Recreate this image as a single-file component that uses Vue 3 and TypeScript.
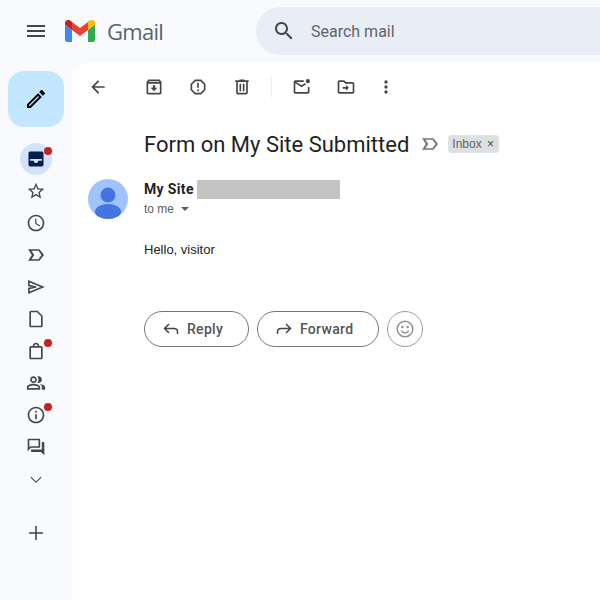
<script setup lang="ts">
const navItems = [
  { name: "inbox", dot: true, d: "M5 3h14a2 2 0 0 1 2 2v14a2 2 0 0 1-2 2H5a2 2 0 0 1-2-2V5a2 2 0 0 1 2-2zm0 9v2h4.200c.3 1.600 1.400 2.800 2.800 2.800s2.500-1.200 2.800-2.800H19v-2H5z" },
  { name: "star", d: "M22 9.24l-7.19-.62L12 2 9.19 8.63 2 9.24l5.46 4.73L5.82 21 12 17.27 18.18 21l-1.63-7.03L22 9.24zM12 15.4l-3.76 2.27 1-4.28-3.32-2.88 4.38-.38L12 6.1l1.71 4.04 4.38.38-3.32 2.88 1 4.28L12 15.4z" },
  { name: "clock", d: "M11.99 2C6.47 2 2 6.48 2 12s4.47 10 9.99 10C17.52 22 22 17.52 22 12S17.52 2 11.99 2zM12 20c-4.42 0-8-3.58-8-8s3.58-8 8-8 8 3.58 8 8-3.58 8-8 8zm.5-13H11v6l5.25 3.15.75-1.23-4.5-2.67z" },
  { name: "important", d: "M15 19H2.500l4.500-7-4.500-7H15c.65 0 1.26.31 1.63.84L21.500 12l-4.870 6.160c-.37.52-.98.84-1.630.84zm-8.500-2H15l3.500-5L15 7H6.500l3.500 5-3.500 5z" },
  { name: "send", outline: true, d: "M3.500 5 20 12 3.500 19v-5.200L12 12 3.500 10.200z" },
  { name: "draft", d: "M14 2H6c-1.1 0-1.99.9-1.99 2L4 20c0 1.1.89 2 1.99 2H18c1.1 0 2-.9 2-2V8l-6-6zM6 20V4h7.200L18 8.800V20H6z" },
  { name: "bag", dot: true, d: "M18 6h-2c0-2.21-1.79-4-4-4S8 3.79 8 6H6c-1.1 0-2 .9-2 2v12c0 1.1.9 2 2 2h12c1.1 0 2-.9 2-2V8c0-1.1-.9-2-2-2zm-6-2c1.1 0 2 .9 2 2h-4c0-1.1.9-2 2-2zm6 16H6V8h12v12z" },
  { name: "people", d: "M16.67 13.13C18.04 14.06 19 15.32 19 17v3h4v-3c0-2.18-3.57-3.47-6.33-3.87zM15 12c2.21 0 4-1.79 4-4s-1.79-4-4-4c-.47 0-.91.1-1.33.24C14.5 5.27 15 6.58 15 8s-.5 2.73-1.33 3.76c.42.14.86.24 1.33.24zM9 12c2.21 0 4-1.79 4-4s-1.79-4-4-4-4 1.79-4 4 1.79 4 4 4zm0-6c1.1 0 2 .9 2 2s-.9 2-2 2-2-.9-2-2 .9-2 2-2zM9 13c-2.67 0-8 1.34-8 4v3h16v-3c0-2.66-5.33-4-8-4zm6 5H3v-.99C3.2 16.29 6.3 15 9 15s5.8 1.29 6 2v1z" },
  { name: "info", dot: true, d: "M11 7h2v2h-2zm0 4h2v6h-2zm1-9C6.48 2 2 6.48 2 12s4.48 10 10 10 10-4.48 10-10S17.52 2 12 2zm0 18c-4.41 0-8-3.59-8-8s3.59-8 8-8 8 3.59 8 8-3.59 8-8 8z" },
  { name: "forum", d: "M15 4v7H5.17L4 12.17V4h11m1-2H3c-.55 0-1 .45-1 1v14l4-4h10c.55 0 1-.45 1-1V3c0-.55-.45-1-1-1zm5 4h-2v9H6v2c0 .55.45 1 1 1h11l4 4V7c0-.55-.45-1-1-1z" },
  { name: "more", d: "M17.700 9.300 12 15l-5.700-5.700-.9.9L12 16.800l6.600-6.600z" }
];

const toolsA = [
  "M20.54 5.23l-1.39-1.68C18.88 3.21 18.47 3 18 3H6c-.47 0-.88.21-1.16.55L3.46 5.23C3.17 5.57 3 6.02 3 6.5V19c0 1.1.9 2 2 2h14c1.1 0 2-.9 2-2V6.5c0-.48-.17-.93-.46-1.27zM6.24 5h11.52l.83 1H5.42l.82-1zM5 19V8h14v11H5zm8.45-9h-2.9v3H8l4 4 4-4h-2.55z",
  "M15.73 3H8.27L3 8.27v7.46L8.27 21h7.46L21 15.73V8.27L15.73 3zM19 14.9L14.9 19H9.1L5 14.9V9.1L9.1 5h5.8L19 9.1v5.8zM11 7h2v6h-2zm0 8h2v2h-2z",
  "M15 4V3H9v1H4v2h1v13c0 1.1.9 2 2 2h10c1.1 0 2-.9 2-2V6h1V4h-5zm2 15H7V6h10v13zM9 8h2v9H9zm4 0h2v9h-2z"
];
const toolsB = [
  "M19 11.900V18H4V7.500l7.500 4.700 5.200-3.300-1-1.700-4.200 2.600L5 6h9.100V4H4c-1.100 0-2 .9-2 2v12c0 1.100.9 2 2 2h15c1.100 0 2-.9 2-2v-6.100h-2zM19 2.500a2.500 2.500 0 1 0 0 5 2.500 2.500 0 0 0 0-5z",
  "M20 6h-8l-2-2H4c-1.100 0-2 .9-2 2v12c0 1.100.9 2 2 2h16c1.100 0 2-.9 2-2V8c0-1.100-.9-2-2-2zm0 12H4V6h5.170l2 2H20v10zm-8-4H8v-2h4V9.500l3.500 3.500-3.500 3.500V14z",
  "M12 8a2 2 0 1 0 0-4 2 2 0 0 0 0 4zm0 2a2 2 0 1 0 0 4 2 2 0 0 0 0-4zm0 6a2 2 0 1 0 0 4 2 2 0 0 0 0-4z"
];
</script>

<template>
  <div class="app">
    <header class="topbar">
      <button class="menu">
        <svg viewBox="0 0 24 24" width="24" height="24"><path d="M3 18h18v-2H3v2zm0-5h18v-2H3v2zm0-7v2h18V6H3z" /></svg>
      </button>
      <div class="brand">
        <svg class="logo" viewBox="0 0 30 22" width="30" height="22">
          <path fill="#4285f4" d="M0 20a2 2 0 0 0 2 2h5V10L0 4.500z" />
          <path fill="#34a853" d="M23 22h5a2 2 0 0 0 2-2V4.500L23 10z" />
          <path fill="#fbbc04" d="M23 1v9l7-5.500V3c0-2.600-3-4-5-2.500z" />
          <path fill="#ea4335" d="M7 10V2l8 6 8-6v8l-8 6z" />
          <path fill="#c5221f" d="M0 3v1.500L7 10V2L5 .5C3 -1 0 .4 0 3z" />
        </svg>
        <span class="wordmark">Gmail</span>
      </div>
      <div class="search">
        <svg viewBox="0 0 24 24" width="24" height="24"><path d="M15.500 14h-.79l-.28-.27C15.410 12.590 16 11.110 16 9.500 16 5.910 13.090 3 9.500 3S3 5.910 3 9.500 5.910 16 9.500 16c1.610 0 3.090-.59 4.230-1.570l.27.28v.79l5 4.990L20.490 19l-4.990-5zm-6 0C7.010 14 5 11.990 5 9.500S7.010 5 9.500 5 14 7.010 14 9.500 11.990 14 9.500 14z" /></svg>
        <span>Search mail</span>
      </div>
    </header>

    <div class="body">
      <aside class="rail">
        <button class="compose">
          <svg viewBox="0 0 24 24" width="24" height="24"><path d="M14.060 9.020l.92.92L5.920 19H5v-.92l9.060-9.060M17.660 3c-.25 0-.51.1-.7.29l-1.830 1.830 3.750 3.750 1.830-1.830c.39-.39.39-1.020 0-1.410l-2.340-2.340c-.2-.2-.45-.29-.71-.29zm-3.600 3.190L3 17.250V21h3.750L17.810 9.940l-3.750-3.750z" /></svg>
        </button>
        <nav class="nav">
          <div v-for="item in navItems" :key="item.name" class="nav-item" :class="{ active: item.name === 'inbox' }">
            <svg viewBox="0 0 24 24" width="20" height="20">
              <path v-if="item.outline" class="outline" :d="item.d" />
              <path v-else fill-rule="evenodd" :d="item.d" />
            </svg>
            <i v-if="item.dot" class="dot"></i>
          </div>
        </nav>
        <div class="add">
          <svg viewBox="0 0 24 24" width="24" height="24"><path d="M19 12.800h-6.200V19h-1.600v-6.200H5v-1.600h6.200V5h1.600v6.200H19z" /></svg>
        </div>
      </aside>

      <main class="panel">
        <div class="toolbar">
          <svg class="back" viewBox="0 0 24 24" width="20" height="20"><path d="M20 11H7.830l5.590-5.590L12 4l-8 8 8 8 1.410-1.410L7.830 13H20v-2z" /></svg>
          <div class="tool-group">
            <svg v-for="d in toolsA" :key="d" viewBox="0 0 24 24" width="20" height="20"><path :d="d" /></svg>
          </div>
          <span class="divider"></span>
          <div class="tool-group second">
            <svg v-for="d in toolsB" :key="d" viewBox="0 0 24 24" width="20" height="20"><path :d="d" /></svg>
          </div>
        </div>

        <div class="subject">
          <h1>Form on My Site Submitted</h1>
          <svg class="label-ic" viewBox="0 0 24 24" width="20" height="20"><path d="M15 19H2.500l4.500-7-4.500-7H15c.65 0 1.260.31 1.630.84L21.500 12l-4.870 6.160c-.37.52-.98.84-1.630.84zm-8.500-2H15l3.500-5L15 7H6.500l3.500 5-3.500 5z" /></svg>
          <span class="chip">Inbox <b>×</b></span>
        </div>

        <div class="message">
          <svg class="avatar" viewBox="0 0 40 40" width="40" height="40">
            <circle cx="20" cy="20" r="20" fill="#a0c3ff" />
            <circle cx="20" cy="16" r="7.500" fill="#4374e0" />
            <ellipse cx="20" cy="32.500" rx="13" ry="7.500" fill="#4374e0" />
          </svg>
          <div class="meta">
            <div class="from"><strong>My Site</strong><span class="redacted"></span></div>
            <div class="to">to me <i class="caret"></i></div>
          </div>
        </div>

        <p class="text">Hello, visitor</p>

        <div class="actions">
          <button class="pill reply">
            <svg viewBox="0 0 20 20" width="20" height="20"><path d="M8 5 3.500 9.500 8 14M3.500 9.500H13c2 0 3.500 1.500 3.500 3.500v2" /></svg>
            Reply
          </button>
          <button class="pill forward">
            <svg viewBox="0 0 20 20" width="20" height="20"><path d="M12 5l4.500 4.500L12 14M16.500 9.500H7c-2 0-3.500 1.500-3.500 3.500v2" /></svg>
            Forward
          </button>
          <button class="smile">
            <svg viewBox="0 0 20 20" width="20" height="20">
              <circle cx="10" cy="10" r="7.800" />
              <circle class="eye" cx="7.300" cy="8" r="1.200" />
              <circle class="eye" cx="12.700" cy="8" r="1.200" />
              <path d="M6.300 11.500c.8 1.600 2.100 2.400 3.700 2.400s2.900-.8 3.700-2.400" />
            </svg>
          </button>
        </div>
      </main>
    </div>
  </div>
</template>

<style scoped>
.app {
  width: 600px;
  height: 600px;
  overflow: hidden;
  background: #f8fafd;
  font-family: Roboto, "Liberation Sans", sans-serif;
  color: #1f1f1f;
  display: flex;
  flex-direction: column;
}

button {
  font-family: inherit;
  background: none;
  padding: 0;
  border: none;
}

.topbar {
  height: 63px;
  flex: none;
  display: flex;
  align-items: center;
  padding-bottom: 1px;
  box-sizing: border-box;
}

.menu {
  width: 24px;
  height: 24px;
  margin-left: 24px;
  fill: #444746;
}

.brand {
  display: flex;
  align-items: center;
  width: 196px;
  margin-left: 17px;
  flex: none;
}

.logo {
  flex: none;
}

.wordmark {
  margin-left: 12px;
  font-size: 22px;
  color: #5f6368;
  font-family: "Open Sans", sans-serif;
  letter-spacing: -0.7px;
}

.search {
  width: 400px;
  height: 48px;
  flex: none;
  margin-left: -5px;
  background: #e9eef6;
  border-radius: 24px 0 0 24px;
  display: flex;
  align-items: center;
  padding-left: 16px;
  box-sizing: border-box;
  fill: #444746;
  font-size: 16px;
  color: #5f6368;
}

.search span {
  margin-left: 15px;
}

.body {
  flex: 1;
  display: flex;
  min-height: 0;
}

.rail {
  width: 72px;
  flex: none;
  display: flex;
  flex-direction: column;
  align-items: center;
}

.compose {
  width: 56px;
  height: 56px;
  margin-top: 8px;
  background: #c2e7ff;
  border-radius: 16px;
  display: flex;
  align-items: center;
  justify-content: center;
  fill: #000;
}

.nav {
  margin-top: 16px;
  display: flex;
  flex-direction: column;
}

.nav-item {
  position: relative;
  width: 32px;
  height: 32px;
  display: flex;
  align-items: center;
  justify-content: center;
  border-radius: 50%;
  fill: #444746;
}

.nav-item.active {
  background: #d3e3fd;
  fill: #041e49;
}

.outline {
  fill: none;
  stroke: #444746;
  stroke-width: 2;
  stroke-linejoin: miter;
}

.dot {
  position: absolute;
  top: 4px;
  right: 0;
  width: 8px;
  height: 8px;
  border-radius: 50%;
  background: #c5221f;
}

.add {
  margin-top: 26px;
  height: 24px;
  fill: #444746;
}

.panel {
  flex: 1;
  background: #fff;
  border-radius: 16px 0 0 0;
  min-width: 0;
}

.toolbar {
  height: 48px;
  display: flex;
  align-items: center;
  fill: #444746;
}

.toolbar svg {
  flex: none;
}

.back {
  margin-left: 16px;
}

.tool-group {
  display: flex;
  gap: 24px;
  margin-left: 36px;
}

.divider {
  width: 1px;
  height: 20px;
  background: #e8eaed;
  margin-left: 19px;
}

.tool-group.second {
  margin-left: 20px;
}

.tool-group.second svg:last-child {
  margin-left: -4px;
}

.subject {
  margin-top: 19px;
  padding-left: 72px;
  display: flex;
  align-items: center;
  height: 28px;
}

h1 {
  margin: 0;
  font-size: 22px;
  font-weight: 400;
  color: #1f1f1f;
  white-space: nowrap;
}

.label-ic {
  margin-left: 11px;
  fill: #757575;
  flex: none;
}

.chip {
  margin-left: 8px;
  background: #dddfe1;
  border-radius: 4px;
  height: 18px;
  line-height: 18px;
  padding: 0 5px 0 4px;
  font-size: 12px;
  color: #666;
  font-family: "Liberation Sans", sans-serif;
}

.chip b {
  font-weight: 400;
  color: #444746;
  margin-left: 2px;
}

.message {
  margin-top: 21px;
  padding-left: 16px;
  display: flex;
}

.avatar {
  flex: none;
}

.meta {
  margin-left: 16px;
}

.from {
  display: flex;
  align-items: center;
  height: 20px;
}

.from strong {
  font-size: 14px;
  font-weight: 700;
  letter-spacing: 0.35px;
  color: #1f1f1f;
}

.redacted {
  width: 143px;
  height: 19px;
  margin-left: 3px;
  background: #c4c4c4;
}

.to {
  margin-top: 3px;
  font-size: 12px;
  color: #5e5e5e;
  font-family: "Liberation Sans", sans-serif;
  display: flex;
  align-items: center;
}

.caret {
  margin-left: 7px;
  border: 4px solid transparent;
  border-top: 4px solid #5e5e5e;
  border-bottom: 0;
}

.text {
  margin: 22px 0 0 72px;
  font-size: 13px;
  line-height: 18px;
  font-family: "Liberation Sans", sans-serif;
  color: #222;
}

.actions {
  margin: 52px 0 0 72px;
  display: flex;
  gap: 8px;
}

.pill {
  height: 36px;
  box-sizing: border-box;
  border: 1px solid #747775;
  border-radius: 18px;
  display: flex;
  align-items: center;
  font-size: 14px;
  font-weight: 500;
  letter-spacing: 0.3px;
  color: #555;
  padding-left: 16px;
}

.pill svg {
  fill: none;
  stroke: #444746;
  stroke-width: 1.500;
  margin-right: 6px;
}

.reply {
  width: 105px;
}

.forward {
  width: 122px;
}

.smile {
  width: 36px;
  height: 36px;
  box-sizing: border-box;
  border: 1px solid #9a9a9a;
  border-radius: 50%;
  display: flex;
  align-items: center;
  justify-content: center;
}

.smile svg {
  fill: none;
  stroke: #8e8e8e;
  stroke-width: 1.500;
}

.smile .eye {
  fill: #8e8e8e;
  stroke: none;
}
</style>
